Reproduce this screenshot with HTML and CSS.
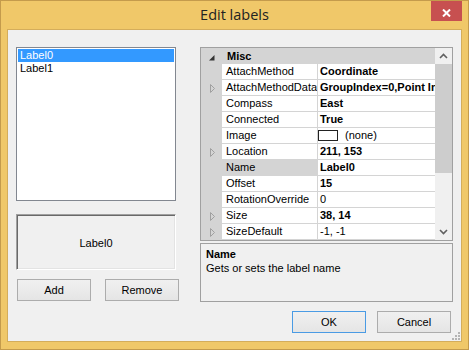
FILE: index.html
```html
<!DOCTYPE html>
<html>
	<head>
		<link rel="stylesheet" href="styles.css">
	</head>
	<body>
		<div class="window">
			<div class="titlebar">
				<span></span>
				<span class="title">Edit labels</span>
				<div class="close">
					<svg width="9" height="8" viewBox="0 0 9 8"><path d="M1 0.5 L8 7.5 M8 0.5 L1 7.5" stroke="#fff" stroke-width="2"/></svg>
				</div>
			</div>
			<div class="client">
				<div class="main">
					<div class="left">
						<div class="listbox">
							<div class="item sel">Label0</div>
							<div class="item">Label1</div>
						</div>
						<div class="preview">Label0</div>
						<div class="btn_row">
							<button class="btn add">Add</button>
							<button class="btn remove">Remove</button>
						</div>
					</div>
					<div class="right">
						<div class="pg">
							<div class="pg_rows">
								<div class="cat">
									<span class="gut"><svg class="tri_open" width="6" height="6" viewBox="0 0 6 6"><polygon points="5.5,0 5.5,5.5 0,5.5" fill="#333"/></svg></span>
									<span class="cat_name">Misc</span>
								</div>
								<div class="row"><span class="gut"></span><span class="pname">AttachMethod</span><span class="pval b">Coordinate</span></div>
								<div class="row"><span class="gut"><svg class="tri" width="5" height="9" viewBox="0 0 5 9"><polygon points="0.5,0.5 4.5,4.5 0.5,8.5" fill="none" stroke="#a0a0a0"/></svg></span><span class="pname">AttachMethodData</span><span class="pval b">GroupIndex=0,Point Index=0</span></div>
								<div class="row"><span class="gut"></span><span class="pname">Compass</span><span class="pval b">East</span></div>
								<div class="row"><span class="gut"></span><span class="pname">Connected</span><span class="pval b">True</span></div>
								<div class="row"><span class="gut"></span><span class="pname">Image</span><span class="pval img"><span class="swatch"></span>(none)</span></div>
								<div class="row"><span class="gut"><svg class="tri" width="5" height="9" viewBox="0 0 5 9"><polygon points="0.5,0.5 4.5,4.5 0.5,8.5" fill="none" stroke="#a0a0a0"/></svg></span><span class="pname">Location</span><span class="pval b">211, 153</span></div>
								<div class="row selected"><span class="gut"></span><span class="pname">Name</span><span class="pval b">Label0</span></div>
								<div class="row"><span class="gut"></span><span class="pname">Offset</span><span class="pval b">15</span></div>
								<div class="row"><span class="gut"></span><span class="pname">RotationOverride</span><span class="pval">0</span></div>
								<div class="row"><span class="gut"><svg class="tri" width="5" height="9" viewBox="0 0 5 9"><polygon points="0.5,0.5 4.5,4.5 0.5,8.5" fill="none" stroke="#a0a0a0"/></svg></span><span class="pname">Size</span><span class="pval b">38, 14</span></div>
								<div class="row"><span class="gut"><svg class="tri" width="5" height="9" viewBox="0 0 5 9"><polygon points="0.5,0.5 4.5,4.5 0.5,8.5" fill="none" stroke="#a0a0a0"/></svg></span><span class="pname">SizeDefault</span><span class="pval">-1, -1</span></div>
							</div>
							<div class="vscroll">
								<div class="sb_btn"><svg width="9" height="6" viewBox="0 0 9 6"><polyline points="1,5 4.5,1.5 8,5" fill="none" stroke="#606060" stroke-width="1.6"/></svg></div>
								<div class="sb_thumb"></div>
								<div class="sb_track"></div>
								<div class="sb_btn"><svg width="9" height="6" viewBox="0 0 9 6"><polyline points="1,1 4.5,4.5 8,1" fill="none" stroke="#606060" stroke-width="1.6"/></svg></div>
							</div>
						</div>
						<div class="desc">
							<div class="desc_title">Name</div>
							<div>Gets or sets the label name</div>
						</div>
					</div>
				</div>
				<div class="footer">
					<button class="btn default">OK</button>
					<button class="btn">Cancel</button>
				</div>
				<svg class="grip" width="11" height="11" viewBox="0 0 11 11">
					<rect x="8" y="2" width="2" height="2" fill="#b4b4b4"/>
					<rect x="5" y="5" width="2" height="2" fill="#b4b4b4"/>
					<rect x="8" y="5" width="2" height="2" fill="#b4b4b4"/>
					<rect x="2" y="8" width="2" height="2" fill="#b4b4b4"/>
					<rect x="5" y="8" width="2" height="2" fill="#b4b4b4"/>
					<rect x="8" y="8" width="2" height="2" fill="#b4b4b4"/>
				</svg>
			</div>
		</div>
	</body>
</html>
```

FILE: styles.css
```css
body {
	margin: 0;
	font-family: "Liberation Sans", Arial, sans-serif;
	font-size: 11px;
	color: #000;
}

.window {
	width: 469px;
	height: 350px;
	box-sizing: border-box;
	border: 1px solid #c49b4c;
	background: #f0c869;
	padding: 0 6px 7px 6px;
	display: flex;
	flex-direction: column;
}

.titlebar {
	height: 28px;
	display: grid;
	grid-template-columns: 1fr auto 1fr;
	align-items: center;
}
.title {
	font-family: "Open Sans", sans-serif;
	font-size: 14.5px;
	line-height: 28px;
	color: #222;
}
.close {
	justify-self: end;
	align-self: start;
	width: 31px;
	height: 20px;
	background: #c75050;
	display: flex;
	justify-content: center;
	padding-top: 8px;
	box-sizing: border-box;
}
.close svg {
	display: block;
}

.client {
	flex: 1;
	position: relative;
	border: 1px solid #d4ad5b;
	background: #f0f0f0;
	padding: 17px 8px 0 8px;
}

.main {
	display: flex;
}
.left {
	width: 163px;
	margin-right: 21px;
}
.right {
	width: 253px;
}

.listbox {
	width: 160px;
	height: 154px;
	box-sizing: border-box;
	border: 1px solid #828790;
	background: #fff;
	padding: 1px 1px 0 1px;
}
.item {
	height: 13px;
	line-height: 13px;
	padding-left: 2px;
}
.item.sel {
	background: #3399ff;
	color: #fff;
}

.preview {
	margin-top: 13px;
	width: 160px;
	height: 56px;
	box-sizing: border-box;
	border-top: 1px solid #a0a0a0;
	border-left: 1px solid #a0a0a0;
	border-right: 1px solid #fff;
	border-bottom: 1px solid #fff;
	box-shadow: inset 1px 1px 0 #696969, inset -1px -1px 0 #e3e3e3;
	display: flex;
	align-items: center;
	justify-content: center;
	padding-top: 2px;
}

.btn_row {
	display: flex;
	margin-top: 9px;
}
.btn {
	width: 74px;
	height: 22px;
	border: 1px solid #acacac;
	background: linear-gradient(#f0f0f0, #e5e5e5);
	font-family: "Liberation Sans", Arial, sans-serif;
	font-size: 11px;
	color: #000;
	padding: 0;
}
.btn.add {
	margin-left: 1px;
}
.btn.remove {
	margin-left: 14px;
}
.btn.default {
	border-color: #4a9be4;
}

/* property grid */
.pg {
	height: 194px;
	box-sizing: border-box;
	border: 1px solid #a0a0a0;
	display: flex;
	background: #fff;
}
.pg_rows {
	width: 234px;
}
.cat, .row {
	display: flex;
	height: 16px;
}
.cat {
	background: #d4d4d4;
}
.gut {
	width: 21px;
	flex: none;
	background: #d4d4d4;
	position: relative;
}
.tri_open {
	position: absolute;
	left: 8px;
	top: 7px;
}
.tri {
	position: absolute;
	left: 9px;
	top: 4px;
}
.cat_name {
	font-weight: bold;
	line-height: 16px;
	padding-left: 5px;
}
.pname, .pval {
	box-sizing: border-box;
	height: 16px;
	line-height: 15px;
	border-bottom: 1px solid #d4d4d4;
	white-space: nowrap;
	overflow: hidden;
}
.pname {
	width: 96px;
	border-right: 1px solid #d4d4d4;
	padding-left: 4px;
}
.pval {
	width: 117px;
	padding-left: 2px;
}
.pval.b {
	font-weight: bold;
}
.pval.img {
	padding-left: 0;
	display: flex;
	align-items: flex-start;
}
.swatch {
	width: 20px;
	height: 11px;
	box-sizing: border-box;
	border: 1px solid #222;
	margin: 2px 7px 0 0;
	background: #fff;
}
.row.selected .pname {
	background: #d4d4d4;
}

.vscroll {
	width: 17px;
	display: flex;
	flex-direction: column;
	background: #f0f0f0;
}
.sb_btn {
	height: 16px;
	display: flex;
	align-items: center;
	justify-content: center;
}
.sb_thumb {
	height: 109px;
	background: #cdcdcd;
}
.sb_track {
	flex: 1;
}

.desc {
	margin-top: 2px;
	height: 59px;
	box-sizing: border-box;
	border: 1px solid #a0a0a0;
	padding: 3px 5px 0 5px;
	line-height: 14px;
}
.desc_title {
	font-weight: bold;
}

.footer {
	display: flex;
	justify-content: flex-end;
	gap: 11px;
	margin-top: 9px;
	padding-right: 2px;
}

.grip {
	position: absolute;
	right: 0;
	bottom: 0;
}
```
